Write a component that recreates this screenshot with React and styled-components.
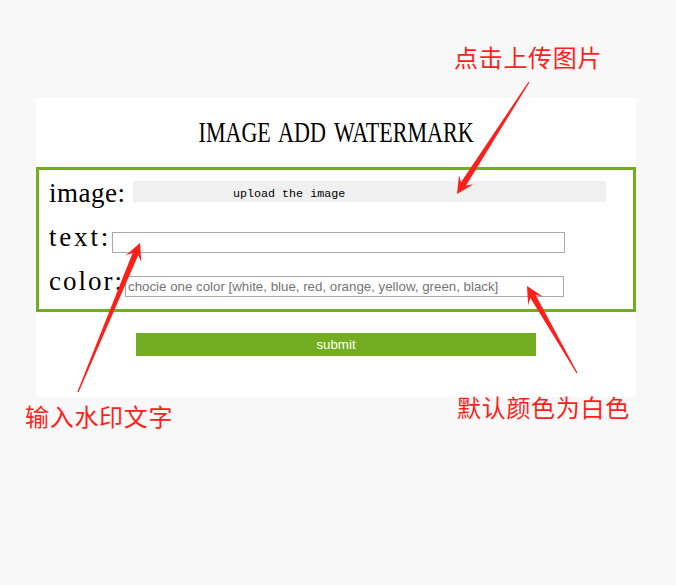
import React from "react";
import styled, { createGlobalStyle } from "styled-components";

const GlobalStyle = createGlobalStyle`
  body {
    margin: 0;
    background: #f8f8f8;
    font-family: "Liberation Serif", serif;
  }
`;

const Page = styled.div`
  position: relative;
  width: 676px;
  min-height: 585px;
  padding-top: 98px;
  box-sizing: border-box;
`;

const Panel = styled.div`
  margin-left: 36px;
  width: 600px;
  background: #fff;
  padding: 16px 0 41px;
`;

const Title = styled.h1`
  margin: 0;
  height: 36px;
  font-size: 30px;
  line-height: 36px;
  font-weight: normal;
  text-align: center;
  color: #000;
  white-space: nowrap;

  span {
    display: inline-block;
    word-spacing: 4px;
    transform: scaleX(0.735);
  }
`;

const FormBox = styled.div`
  margin-top: 17px;
  border: 3px solid #73ad21;
  padding: 10px 0 12px 10px;
  display: flex;
  flex-direction: column;
  gap: 15px;
`;

const Row = styled.div`
  display: flex;
  align-items: flex-end;
`;

const Label = styled.label`
  width: ${p => p.w}px;
  flex-shrink: 0;
  font-size: 27px;
  line-height: 27px;
  letter-spacing: ${p => p.spacing}px;
  margin-bottom: 2px;
  color: #000;
  white-space: nowrap;
`;

const Upload = styled.div`
  width: 473px;
  height: 21px;
  box-sizing: border-box;
  margin-bottom: 7px;
  background: #f0f0f0;
  padding: 6px 0 0 100px;
  font-family: "Liberation Mono", monospace;
  font-size: 11.7px;
  line-height: 15px;
  color: #000;
`;

const Input = styled.input`
  width: ${p => p.w}px;
  height: 21px;
  box-sizing: border-box;
  border: 1px solid #a9a9a9;
  padding: 0 2px;
  margin: 0;
  font-family: "Liberation Sans", Arial, sans-serif;
  font-size: 13.3px;
  background: #fff;
  outline: none;

  &::placeholder {
    color: #757575;
  }
`;

const Submit = styled.button`
  display: block;
  margin: 21px auto 0;
  width: 400px;
  height: 23px;
  border: none;
  background: #73ad21;
  color: #fff;
  font-family: "Liberation Sans", Arial, sans-serif;
  font-size: 13.3px;
  padding: 0;
`;

const Overlay = styled.svg`
  position: absolute;
  left: 0;
  top: 0;
  pointer-events: none;
`;

const Note = styled.div`
  position: absolute;
  left: ${p => p.x}px;
  top: ${p => p.y}px;
  font-family: "Noto Sans CJK SC", sans-serif;
  font-size: 24px;
  line-height: 24px;
  letter-spacing: 0.7px;
  color: #fe1f1a;
  white-space: nowrap;
`;

function arrowPoints([x1, y1], [x2, y2]) {
  const dx = x2 - x1;
  const dy = y2 - y1;
  const len = Math.hypot(dx, dy);
  const ux = dx / len;
  const uy = dy / len;
  const nx = -uy;
  const ny = ux;
  const at = (back, side) => [x2 - ux * back + nx * side, y2 - uy * back + ny * side];
  const pts = [
    [x1 + nx * 0.6, y1 + ny * 0.6],
    at(12, 3),
    at(17, 8.5),
    [x2, y2],
    at(17, -8.5),
    at(12, -3),
    [x1 - nx * 0.6, y1 - ny * 0.6]
  ];
  return pts.map(p => p.map(v => v.toFixed(1)).join(",")).join(" ");
}

const arrows = [
  [[529, 82], [457, 194]],
  [[78, 392], [140, 243]],
  [[577, 373], [527, 286]]
];

export default function App() {
  return (
    <Page>
      <GlobalStyle />
      <Panel>
        <Title>
          <span>IMAGE ADD WATERMARK</span>
        </Title>
        <FormBox>
          <Row>
            <Label w={84} spacing={0.5}>image:</Label>
            <Upload>upload the image</Upload>
          </Row>
          <Row>
            <Label w={63} spacing={2.8}>text:</Label>
            <Input w={453} type="text" />
          </Row>
          <Row>
            <Label w={76} spacing={2}>color:</Label>
            <Input
              w={439}
              type="text"
              placeholder="chocie one color [white, blue, red, orange, yellow, green, black]"
            />
          </Row>
        </FormBox>
        <Submit>submit</Submit>
      </Panel>

      <Overlay width="676" height="585">
        {arrows.map(([from, to], i) => (
          <polygon key={i} points={arrowPoints(from, to)} fill="#fe1f1a" />
        ))}
      </Overlay>
      <Note x={454} y={45}>点击上传图片</Note>
      <Note x={25} y={404}>输入水印文字</Note>
      <Note x={457} y={395}>默认颜色为白色</Note>
    </Page>
  );
}
